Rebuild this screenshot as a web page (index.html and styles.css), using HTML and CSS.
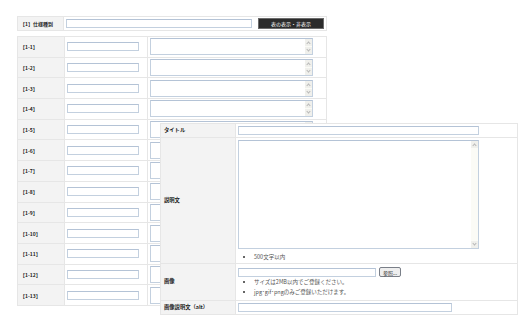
FILE: index.html
```html
<!DOCTYPE html>
<html lang="ja">
<head>
<meta charset="utf-8">
<title>仕様入力</title>
<link rel="stylesheet" href="styles.css">
</head>
<body>
<div class="page">
  <table class="spec-head">
    <tr>
      <th>【1】仕様種別</th>
      <td>
        <div class="head-line">
          <input type="text" class="txt txt-kind">
          <button type="button" class="btn-toggle">表の表示・非表示</button>
        </div>
      </td>
    </tr>
  </table>

  <table class="spec-list">
    <tr><th>【1-1】</th><td class="c-name"><input type="text" class="txt txt-name"></td><td class="c-val"><div class="area"><span class="sb"><i class="up"></i><i class="down"></i></span></div></td></tr>
    <tr><th>【1-2】</th><td class="c-name"><input type="text" class="txt txt-name"></td><td class="c-val"><div class="area"><span class="sb"><i class="up"></i><i class="down"></i></span></div></td></tr>
    <tr><th>【1-3】</th><td class="c-name"><input type="text" class="txt txt-name"></td><td class="c-val"><div class="area"><span class="sb"><i class="up"></i><i class="down"></i></span></div></td></tr>
    <tr><th>【1-4】</th><td class="c-name"><input type="text" class="txt txt-name"></td><td class="c-val"><div class="area"><span class="sb"><i class="up"></i><i class="down"></i></span></div></td></tr>
    <tr><th>【1-5】</th><td class="c-name"><input type="text" class="txt txt-name"></td><td class="c-val"><div class="area"><span class="sb"><i class="up"></i><i class="down"></i></span></div></td></tr>
    <tr><th>【1-6】</th><td class="c-name"><input type="text" class="txt txt-name"></td><td class="c-val"><div class="area"><span class="sb"><i class="up"></i><i class="down"></i></span></div></td></tr>
    <tr><th>【1-7】</th><td class="c-name"><input type="text" class="txt txt-name"></td><td class="c-val"><div class="area"><span class="sb"><i class="up"></i><i class="down"></i></span></div></td></tr>
    <tr><th>【1-8】</th><td class="c-name"><input type="text" class="txt txt-name"></td><td class="c-val"><div class="area"><span class="sb"><i class="up"></i><i class="down"></i></span></div></td></tr>
    <tr><th>【1-9】</th><td class="c-name"><input type="text" class="txt txt-name"></td><td class="c-val"><div class="area"><span class="sb"><i class="up"></i><i class="down"></i></span></div></td></tr>
    <tr><th>【1-10】</th><td class="c-name"><input type="text" class="txt txt-name"></td><td class="c-val"><div class="area"><span class="sb"><i class="up"></i><i class="down"></i></span></div></td></tr>
    <tr><th>【1-11】</th><td class="c-name"><input type="text" class="txt txt-name"></td><td class="c-val"><div class="area"><span class="sb"><i class="up"></i><i class="down"></i></span></div></td></tr>
    <tr><th>【1-12】</th><td class="c-name"><input type="text" class="txt txt-name"></td><td class="c-val"><div class="area"><span class="sb"><i class="up"></i><i class="down"></i></span></div></td></tr>
    <tr><th>【1-13】</th><td class="c-name"><input type="text" class="txt txt-name"></td><td class="c-val"><div class="area"><span class="sb"><i class="up"></i><i class="down"></i></span></div></td></tr>
  </table>
</div>

<div class="panel">
  <table class="panel-form">
    <tr class="r-title">
      <th>タイトル</th>
      <td><input type="text" class="txt txt-title"></td>
    </tr>
    <tr class="r-desc">
      <th>説明文</th>
      <td>
        <div class="area area-big"><span class="sb"><i class="up"></i><i class="down"></i></span></div>
        <ul class="notes notes-desc">
          <li>500文字以内</li>
        </ul>
      </td>
    </tr>
    <tr class="r-image">
      <th>画像</th>
      <td>
        <div class="file-line">
          <input type="text" class="txt txt-file">
          <button type="button" class="btn-browse">参照...</button>
        </div>
        <ul class="notes">
          <li>サイズは2MB以内でご登録ください。</li>
          <li>jpg･gif･pngのみご登録いただけます。</li>
        </ul>
      </td>
    </tr>
    <tr class="r-alt">
      <th>画像説明文（alt）</th>
      <td><input type="text" class="txt txt-alt"></td>
    </tr>
  </table>
</div>
</body>
</html>
```

FILE: styles.css
```css
body {
	margin: 0;
	background: #fff;
	color: #333;
	font-family: "Noto Sans CJK JP", "Noto Sans", sans-serif;
}

.page {
	padding: 16px 0 0 17px;
}

table {
	border-collapse: collapse;
	border-spacing: 0;
}
th, td {
	border: 1px solid #e6e6e6;
	padding: 0;
}
th {
	background: #f3f3f3;
	font-weight: bold;
	text-align: left;
	font-size: 5px;
	line-height: 1;
	color: #222;
	padding-left: 2px;
	white-space: nowrap;
}

/* text boxes */
.txt {
	display: block;
	box-sizing: border-box;
	height: 9px;
	margin: 0;
	padding: 0;
	border: 1px solid #c3d0df;
	border-top-color: #b4c3d6;
	background: #fff;
	font-size: 5px;
}

/* fake textarea with its scroll bar */
.area {
	box-sizing: border-box;
	display: flex;
	justify-content: flex-end;
	border: 1px solid #c3d0df;
	border-top-color: #b4c3d6;
	background: #fff;
}
.sb {
	width: 7px;
	display: flex;
	flex-direction: column;
	justify-content: space-between;
	background: #fbfbf6;
}
.sb i {
	display: flex;
	align-items: center;
	justify-content: center;
	height: 7px;
	background: #f0f0ec;
}
.sb i::after {
	content: "";
	width: 2px;
	height: 2px;
	border-left: 1px solid #b8b8b8;
	border-top: 1px solid #b8b8b8;
}
.sb .up::after {
	transform: translateY(1px) rotate(45deg);
}
.sb .down::after {
	transform: translateY(-1px) rotate(225deg);
}

/* 仕様種別 */
.spec-head {
	width: 310px;
}
.spec-head tr {
	height: 14px;
}
.spec-head th {
	width: 44px;
}
.spec-head td {
	padding: 0 2px;
}
.head-line {
	display: flex;
	align-items: center;
	gap: 6px;
}
.txt-kind {
	width: 186px;
}
.btn-toggle {
	width: 66px;
	height: 11px;
	margin: 0;
	padding: 0;
	border: 1px solid #6b6b6b;
	background: #2b2b2b;
	color: #fff;
	font-family: inherit;
	font-size: 5px;
	line-height: 1;
}

/* 仕様一覧 */
.spec-list {
	width: 310px;
	margin-top: 5px;
}
.spec-list tr {
	height: 20.7px;
}
.spec-list th {
	width: 44px;
}
.spec-list .c-name {
	width: 80px;
	padding-left: 2px;
}
.txt-name {
	width: 72px;
}
.spec-list .c-val {
	padding-left: 2px;
}
.spec-list .area {
	width: 163px;
	height: 17px;
}

/* 画像パネル */
.panel {
	position: absolute;
	left: 160px;
	top: 123px;
	width: 358px;
	background: #fff;
}
.panel-form {
	width: 358px;
}
.panel-form th {
	width: 71px;
	padding-left: 3px;
	font-size: 5.3px;
	vertical-align: middle;
}
.panel-form td {
	padding-left: 2px;
	vertical-align: top;
}
.r-title {
	height: 14px;
}
.r-title td,
.r-alt td {
	vertical-align: middle;
}
.txt-title {
	width: 241px;
}
.r-desc {
	height: 126px;
}
.area-big {
	width: 241px;
	height: 109px;
	margin-top: 2px;
}
.notes {
	margin: 0;
	padding-left: 16px;
	list-style: square;
	font-size: 5.5px;
	line-height: 10px;
	color: #555;
}
.notes li::marker {
	font-size: 5px;
	color: #666;
}
.notes-desc {
	margin-top: 3px;
}
.r-image {
	height: 37px;
}
.file-line {
	display: flex;
	align-items: center;
	gap: 3px;
	margin-top: 3px;
}
.txt-file {
	width: 138px;
}
.btn-browse {
	width: 22px;
	height: 10px;
	margin: 0;
	padding: 0;
	border: 1px solid #7a7f88;
	border-radius: 2px;
	background: #eeeeee;
	color: #333;
	font-family: inherit;
	font-size: 5px;
	line-height: 1;
}
.r-alt {
	height: 14px;
}
.txt-alt {
	width: 214px;
}
```
